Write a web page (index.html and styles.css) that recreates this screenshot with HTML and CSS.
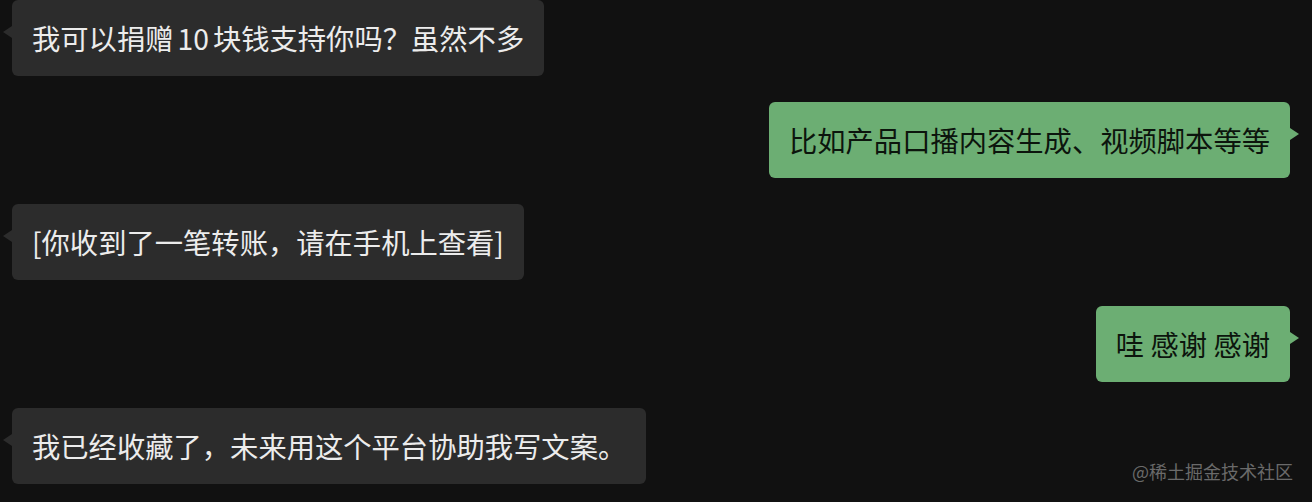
FILE: index.html
```html
<!DOCTYPE html>
<html lang="zh-CN">
<head>
    <meta charset="UTF-8">
    <meta name="viewport" content="width=device-width, initial-scale=1.0">
    <title>聊天记录</title>
    <link rel="stylesheet" href="styles.css">
</head>
<body>
    <div class="chat">
        <div class="msg left">我可以捐赠<span class="num">10</span>块钱支持你吗？虽然不多</div>
        <div class="msg right">比如产品口播内容生成、视频脚本等等</div>
        <div class="msg left">[你收到了一笔转账，请在手机上查看]</div>
        <div class="msg right">哇 感谢 感谢</div>
        <div class="msg left">我已经收藏了，未来用这个平台协助我写文案。</div>
    </div>

    <div class="watermark">@稀土掘金技术社区</div>
</body>
</html>
```

FILE: styles.css
```css
body {
    font-family: "Noto Sans CJK SC", "Noto Sans", sans-serif;
    background: #111111;
    margin: 0;
    width: 1312px;
    height: 502px;
    overflow: hidden;
    position: relative;
}

.chat {
    display: flex;
    flex-direction: column;
    gap: 26px;
    padding: 0 22px 0 12px;
}

.msg {
    position: relative;
    font-size: 28.3px;
    line-height: 40px;
    padding: 18px 20px;
    border-radius: 6px;
    white-space: nowrap;
}

.msg::before {
    content: "";
    position: absolute;
    top: 26px;
    border-top: 6px solid transparent;
    border-bottom: 6px solid transparent;
}

.num {
    margin: 0 4px;
}

.left {
    align-self: flex-start;
    background: #2c2c2c;
    color: #ececec;
}

.left::before {
    left: -9px;
    border-right: 9px solid #2c2c2c;
}

.right {
    align-self: flex-end;
    background: #6cae73;
    color: #0c150d;
}

.right::before {
    right: -9px;
    border-left: 9px solid #6cae73;
}

.watermark {
    position: absolute;
    right: 19px;
    bottom: 18px;
    font-size: 18px;
    color: #6a6a6a;
}
```
